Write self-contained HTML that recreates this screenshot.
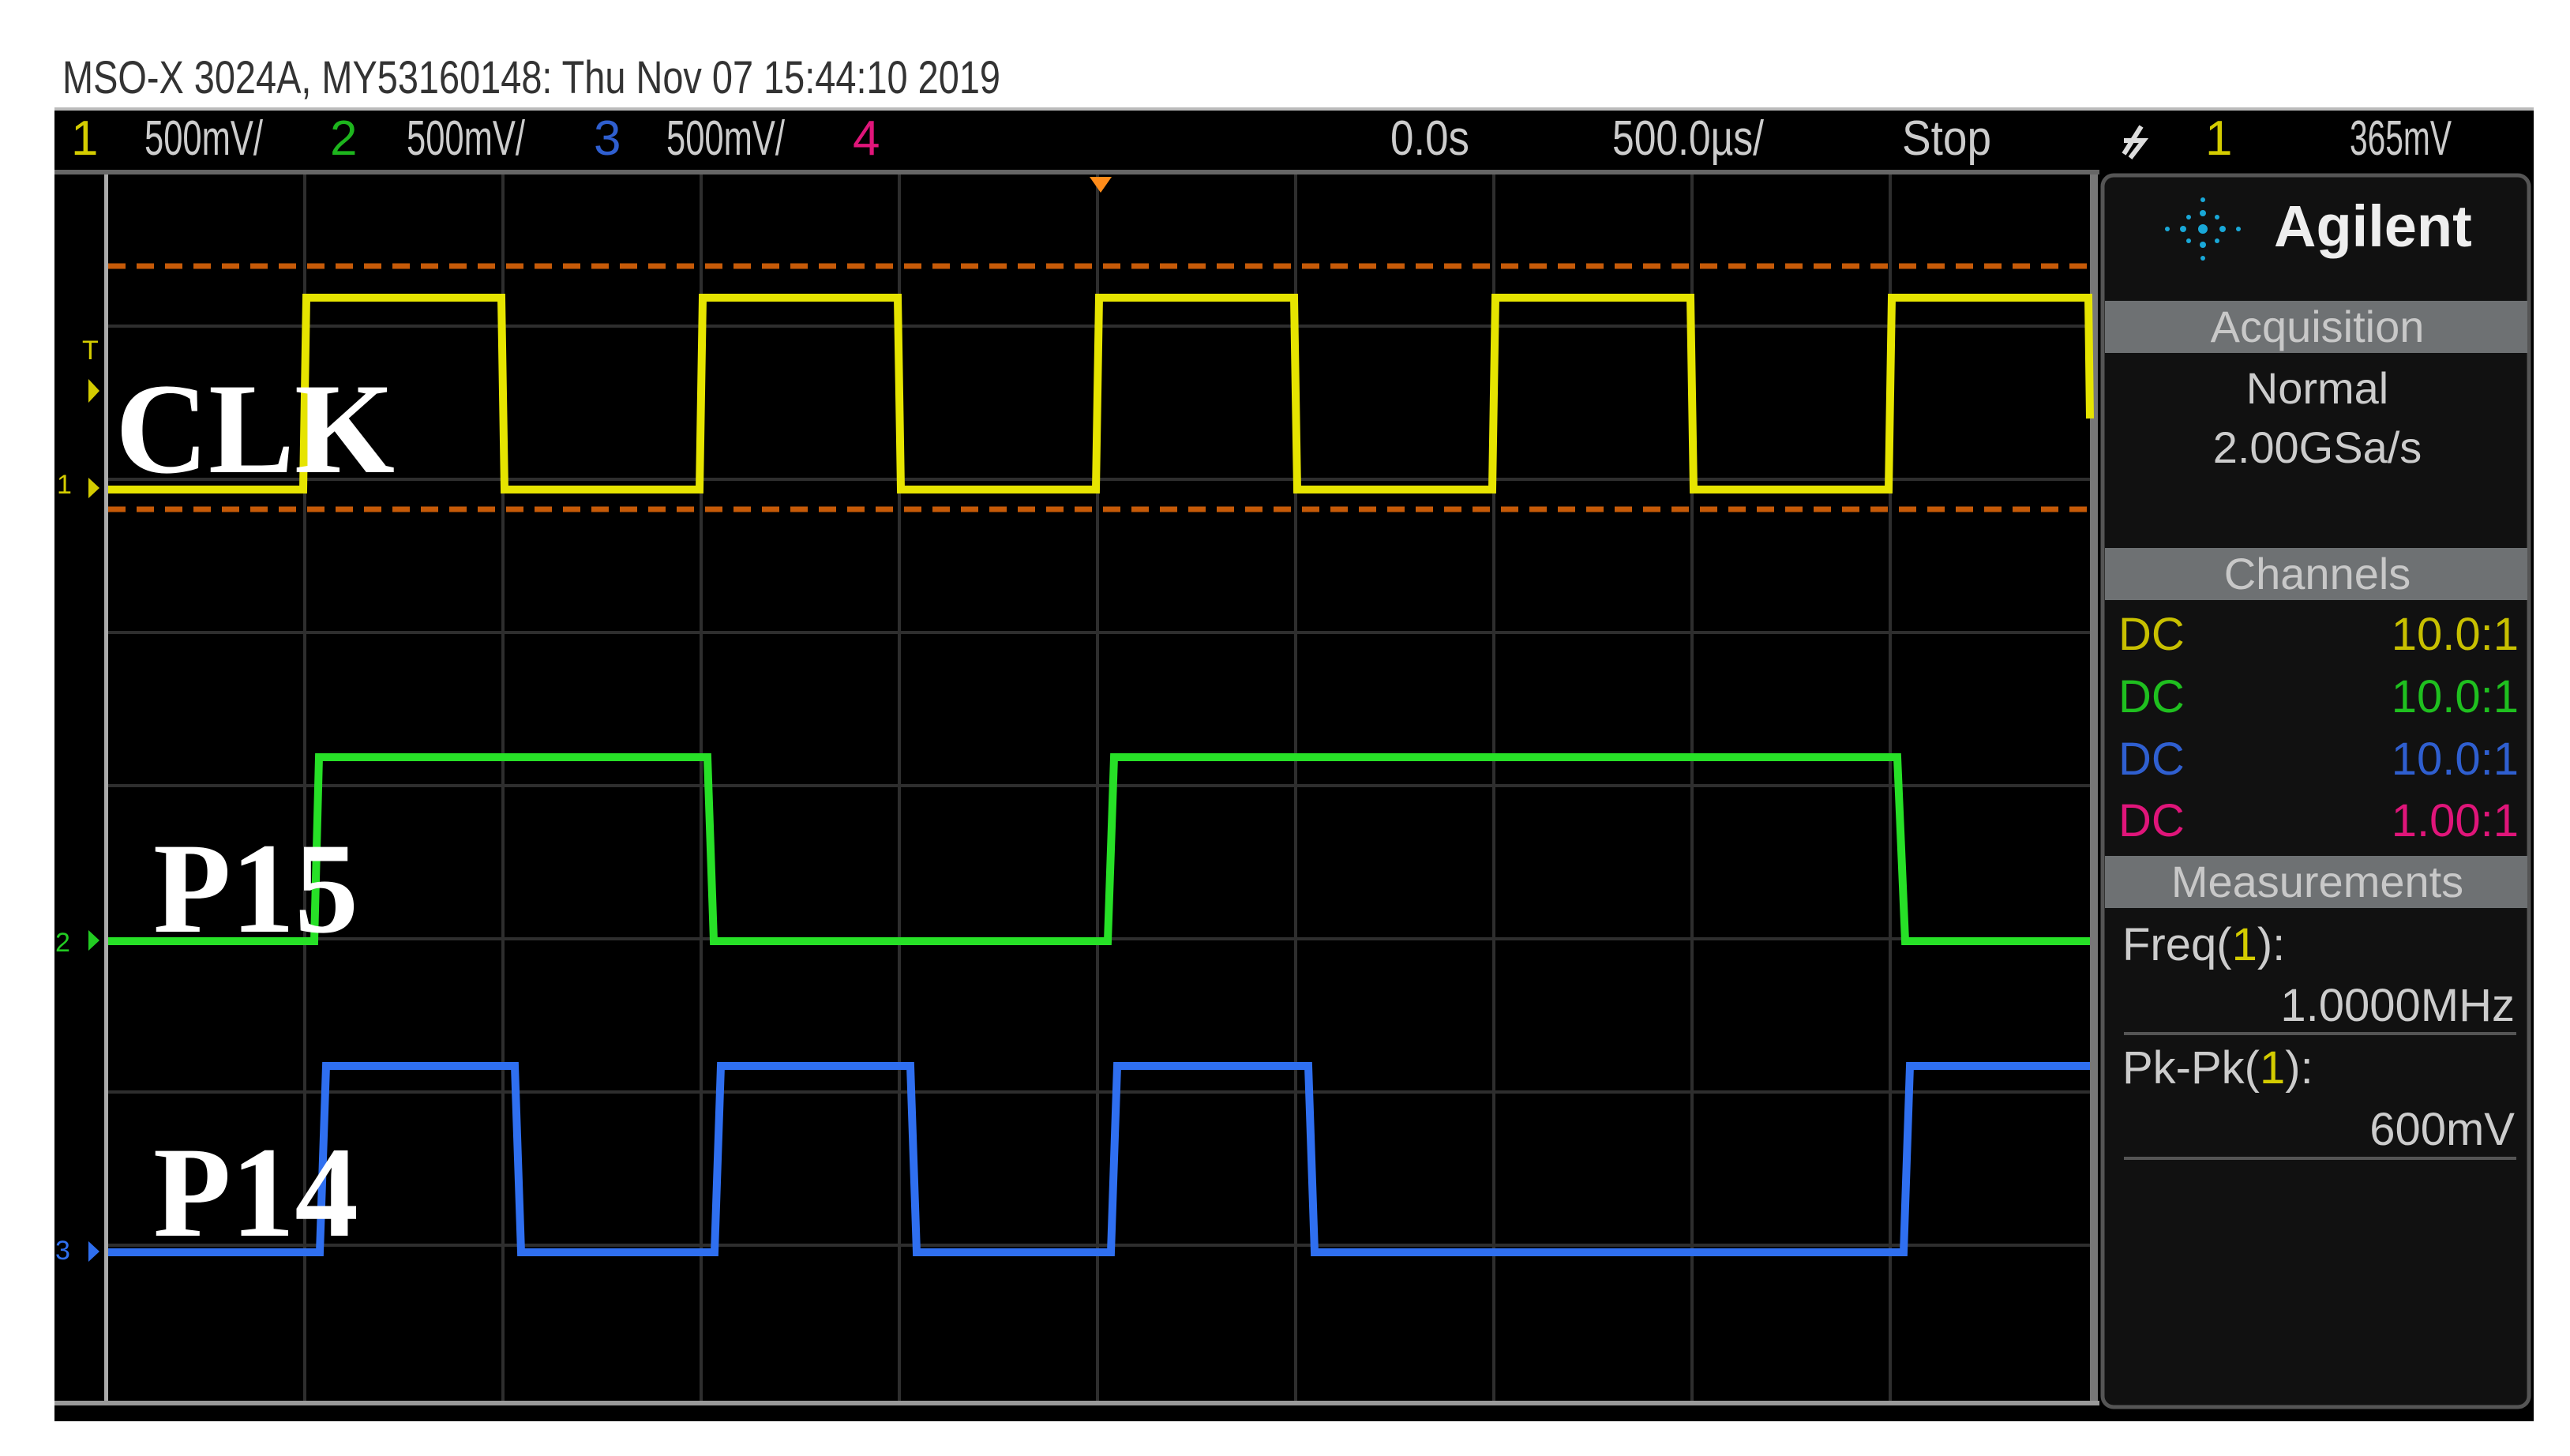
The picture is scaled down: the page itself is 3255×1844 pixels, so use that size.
<!DOCTYPE html>
<html><head><meta charset="utf-8"><style>
html,body{margin:0;padding:0;background:#fff;width:3255px;height:1844px;overflow:hidden}
svg{display:block}
</style></head><body>
<svg width="3255" height="1844" viewBox="0 0 3255 1844" xmlns="http://www.w3.org/2000/svg">
<rect width="3255" height="1844" fill="#fff"/>
<text x="79" y="118" font-family="Liberation Sans Narrow, Liberation Sans, sans-serif" font-size="58" fill="#333" textLength="1188" lengthAdjust="spacingAndGlyphs">MSO-X 3024A, MY53160148: Thu Nov 07 15:44:10 2019</text>
<rect x="69" y="138" width="3140" height="1662" fill="#000"/>
<rect x="69" y="136" width="3140" height="4" fill="#bbb"/>
<rect x="69" y="215" width="2590" height="6" fill="#666"/>
<g font-family="Liberation Sans Narrow, Liberation Sans, sans-serif" font-size="62" fill="#ccc">
<text x="90" y="196" fill="#d4cc00">1</text>
<text x="183" y="196" textLength="150" lengthAdjust="spacingAndGlyphs">500mV/</text>
<text x="418" y="196" fill="#1db51d">2</text>
<text x="515" y="196" textLength="150" lengthAdjust="spacingAndGlyphs">500mV/</text>
<text x="752" y="196" fill="#2f5fd0">3</text>
<text x="844" y="196" textLength="150" lengthAdjust="spacingAndGlyphs">500mV/</text>
<text x="1080" y="196" fill="#e0157a">4</text>
<text x="1761" y="196" textLength="100" lengthAdjust="spacingAndGlyphs">0.0s</text>
<text x="2042" y="196" textLength="192" lengthAdjust="spacingAndGlyphs">500.0µs/</text>
<text x="2409" y="196" textLength="113" lengthAdjust="spacingAndGlyphs">Stop</text>
<text x="2793" y="196" fill="#d4cc00">1</text>
<text x="2976" y="196" textLength="129" lengthAdjust="spacingAndGlyphs">365mV</text>
</g>
<path d="M2690 195 L2712 160 M2690 178 L2715 178 L2698 200" stroke="#ddd" stroke-width="6" fill="none"/>
<g stroke="#2e2e2e" stroke-width="4">
<path d="M386 221V1778M637 221V1778M888 221V1778M1139 221V1778M1390 221V1778M1641 221V1778M1892 221V1778M2143 221V1778M2394 221V1778"/>
<path d="M135 413H2647M135 607H2647M135 801H2647M135 995H2647M135 1189H2647M135 1383H2647M135 1577H2647"/>
</g>
<rect x="132" y="221" width="5" height="1558" fill="#aaa"/>
<rect x="2647" y="221" width="10" height="1558" fill="#777"/>
<rect x="69" y="1774" width="2590" height="6" fill="#999"/>
<path d="M1380 224 L1408 224 L1394 244 Z" fill="#ff8c1a"/>
<g stroke="#c65a08" stroke-width="7" stroke-dasharray="22 14">
<path d="M137 337H2647M137 645H2647"/>
</g>
<path d="M137 620 H384 L388 377 H635 L639 620 H886 L890 377 H1137 L1141 620 H1388 L1392 377 H1639 L1643 620 H1890 L1894 377 H2141 L2145 620 H2392 L2396 377 H2645 L2647 530" stroke="#e6e400" stroke-width="10" fill="none"/>
<path d="M137 1192 H398 L404 959 H896 L904 1192 H1403 L1411 959 H2403 L2413 1192 H2647" stroke="#27e027" stroke-width="10" fill="none"/>
<path d="M137 1586 H405 L413 1350 H652 L660 1586 H905 L913 1350 H1153 L1161 1586 H1407 L1415 1350 H1657 L1665 1586 H2411 L2419 1350 H2647" stroke="#2f6ff0" stroke-width="10" fill="none"/>
<g font-family="Liberation Sans, sans-serif" font-size="34">
<text x="104" y="455" fill="#d4cc00">T</text>
<path d="M112 480 L126 495 L112 510Z" fill="#d4cc00"/>
<text x="72" y="625" fill="#d4cc00">1</text>
<path d="M112 605 L126 618 L112 631Z" fill="#d4cc00"/>
<text x="70" y="1205" fill="#22cc22">2</text>
<path d="M112 1178 L126 1191 L112 1204Z" fill="#22cc22"/>
<text x="70" y="1595" fill="#2f6ff0">3</text>
<path d="M112 1572 L126 1585 L112 1598Z" fill="#2f6ff0"/>
</g>
<g font-family="Liberation Serif, serif" font-weight="bold" font-size="164" fill="#fff">
<text x="146" y="598" textLength="354" lengthAdjust="spacingAndGlyphs">CLK</text>
<text x="194" y="1180" textLength="260" lengthAdjust="spacingAndGlyphs">P15</text>
<text x="194" y="1565" textLength="260" lengthAdjust="spacingAndGlyphs">P14</text>
</g>
<rect x="2663" y="222" width="540" height="1560" rx="14" fill="#111" stroke="#555" stroke-width="5"/>
<g fill="#19a8d8">
<circle cx="2790" cy="290" r="6"/><circle cx="2790" cy="270" r="4"/><circle cx="2790" cy="310" r="4"/><circle cx="2790" cy="253" r="3"/><circle cx="2790" cy="327" r="3"/>
<circle cx="2765" cy="290" r="4"/><circle cx="2815" cy="290" r="4"/><circle cx="2745" cy="290" r="3"/><circle cx="2835" cy="290" r="3"/>
<circle cx="2772" cy="275" r="3"/><circle cx="2808" cy="305" r="3"/><circle cx="2772" cy="305" r="3"/><circle cx="2808" cy="275" r="3"/>
</g>
<text x="2880" y="312" font-family="Liberation Sans, sans-serif" font-weight="bold" font-size="74" fill="#eee">Agilent</text>
<g fill="#6e7173">
<rect x="2666" y="381" width="535" height="66"/>
<rect x="2666" y="694" width="535" height="66"/>
<rect x="2666" y="1084" width="535" height="66"/>
</g>
<g font-family="Liberation Sans Narrow, Liberation Sans, sans-serif" font-size="56" fill="#ccc" text-anchor="middle">
<text x="2935" y="433" fill="#c8c8c8">Acquisition</text>
<text x="2935" y="511">Normal</text>
<text x="2935" y="586">2.00GSa/s</text>
<text x="2935" y="746" fill="#c8c8c8">Channels</text>
<text x="2935" y="1136" fill="#c8c8c8">Measurements</text>
</g>
<g font-family="Liberation Sans Narrow, Liberation Sans, sans-serif" font-size="58">
<text x="2683" y="823" fill="#c8c000">DC</text><text x="3190" y="823" fill="#c8c000" text-anchor="end">10.0:1</text>
<text x="2683" y="902" fill="#1fc01f">DC</text><text x="3190" y="902" fill="#1fc01f" text-anchor="end">10.0:1</text>
<text x="2683" y="981" fill="#2f5fd0">DC</text><text x="3190" y="981" fill="#2f5fd0" text-anchor="end">10.0:1</text>
<text x="2683" y="1059" fill="#e0157a">DC</text><text x="3190" y="1059" fill="#e0157a" text-anchor="end">1.00:1</text>
<text x="2688" y="1216" fill="#ccc">Freq(<tspan fill="#d4cc00">1</tspan>):</text>
<text x="3185" y="1293" fill="#ccc" text-anchor="end">1.0000MHz</text>
<text x="2688" y="1372" fill="#ccc">Pk-Pk(<tspan fill="#d4cc00">1</tspan>):</text>
<text x="3185" y="1450" fill="#ccc" text-anchor="end">600mV</text>
</g>
<rect x="2690" y="1307" width="497" height="4" fill="#555"/>
<rect x="2690" y="1465" width="497" height="4" fill="#555"/>
</svg>
</body></html>
